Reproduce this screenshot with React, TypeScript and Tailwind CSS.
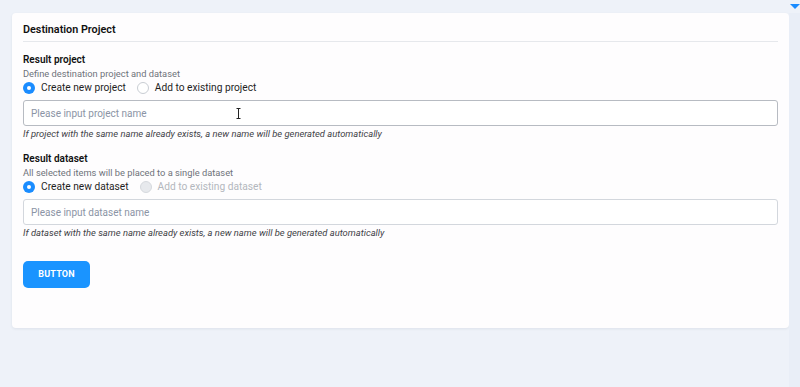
import React, { useState } from 'react';

type RadioProps = {
  checked?: boolean;
  disabled?: boolean;
  label: string;
  onClick?: () => void;
};

const Radio: React.FC<RadioProps> = ({ checked, disabled, label, onClick }) => {
  let circle = 'border border-[#c9cdd3] bg-white';
  if (checked) circle = 'bg-[#1a8cff]';
  if (disabled) circle = 'border border-[#d6d9de] bg-[#e7e9ed]';

  return (
    <button
      type="button"
      onClick={disabled ? undefined : onClick}
      className="flex items-center gap-[6px] h-[16px] leading-[16px]"
    >
      <span className={`w-[12px] h-[12px] rounded-full flex items-center justify-center ${circle}`}>
        {checked && <span className="w-[4px] h-[4px] rounded-full bg-white" />}
      </span>
      <span className={`text-[10.2px] leading-[16px] ${disabled ? 'text-[#b3b7bd]' : 'text-[#1f1f1f]'}`}>
        {label}
      </span>
    </button>
  );
};

const App: React.FC = () => {
  const [projectMode, setProjectMode] = useState<'new' | 'existing'>('new');
  const [projectName, setProjectName] = useState('');
  const [datasetName, setDatasetName] = useState('');

  return (
    <div
      className="min-h-[387px] bg-[#eef2f9] flex"
      style={{ fontFamily: 'Roboto, "Liberation Sans", sans-serif' }}
    >
      <div className="flex-1 pl-[12px] pt-[13px]">
        <div className="bg-[#fefdfe] rounded-[4px] shadow-[0_1px_3px_rgba(30,40,70,0.08)] pt-[9px] px-[11px] pb-[40px]">
          <h2 className="text-[10.8px] leading-[16px] font-semibold text-[#111]">Destination Project</h2>
          <div className="mt-[3px] border-t border-[#e6e8ec]" />

          {/* Result project */}
          <div className="mt-[11px]">
            <div className="text-[10px] leading-[14px] font-semibold text-[#111]">Result project</div>
            <div className="text-[9.3px] leading-[13px] text-[#6e737a]">Define destination project and dataset</div>
            <div className="h-[16px] flex items-center gap-[11px]">
              <Radio
                label="Create new project"
                checked={projectMode === 'new'}
                onClick={() => setProjectMode('new')}
              />
              <Radio
                label="Add to existing project"
                checked={projectMode === 'existing'}
                onClick={() => setProjectMode('existing')}
              />
            </div>
            <div className="relative mt-[4px]">
              <input
                value={projectName}
                onChange={(e) => setProjectName(e.target.value)}
                placeholder="Please input project name"
                className="block w-full h-[26px] rounded-[3px] border border-[#b7bbc2] bg-white px-[7px] text-[10px] text-[#222] placeholder:text-[#8b94a5] outline-none"
              />
              {/* mouse cursor */}
              <svg className="absolute left-[213px] top-[8px]" width="5" height="11" viewBox="0 0 5 11">
                <path d="M0.5 0.5h4M0.5 10.5h4M2.5 0.5v10" stroke="#222" strokeWidth="1" fill="none" />
              </svg>
            </div>
            <div className="mt-[2px] text-[9.4px] leading-[12px] italic text-[#3f4247]">
              If project with the same name already exists, a new name will be generated automatically
            </div>
          </div>

          {/* Result dataset */}
          <div className="mt-[12px]">
            <div className="text-[10px] leading-[14px] font-semibold text-[#111]">Result dataset</div>
            <div className="text-[9.3px] leading-[13px] text-[#6e737a]">All selected items will be placed to a single dataset</div>
            <div className="h-[16px] flex items-center gap-[11px]">
              <Radio label="Create new dataset" checked />
              <Radio label="Add to existing dataset" disabled />
            </div>
            <input
              value={datasetName}
              onChange={(e) => setDatasetName(e.target.value)}
              placeholder="Please input dataset name"
              className="block mt-[4px] w-full h-[26px] rounded-[3px] border border-[#d3d7dd] bg-white px-[7px] text-[10px] text-[#222] placeholder:text-[#8b94a5] outline-none"
            />
            <div className="mt-[2px] text-[9.4px] leading-[12px] italic text-[#3f4247]">
              If dataset with the same name already exists, a new name will be generated automatically
            </div>
          </div>

          <button
            type="button"
            className="block mt-[22px] w-[67px] h-[27px] rounded-[5px] bg-[#1a94ff] text-white text-[9px] font-bold tracking-[0.2px]"
          >
            BUTTON
          </button>
        </div>
      </div>

      {/* scroll strip */}
      <div className="w-[11px] flex flex-col">
        <div className="h-[13px] flex items-start justify-center pt-[4px]">
          <svg width="10" height="5" viewBox="0 0 10 5">
            <path d="M0 0h10L5 5z" fill="#1a8cff" />
          </svg>
        </div>
        <div className="flex-1 bg-[#e9eef7]" />
      </div>
    </div>
  );
};

export default App;
